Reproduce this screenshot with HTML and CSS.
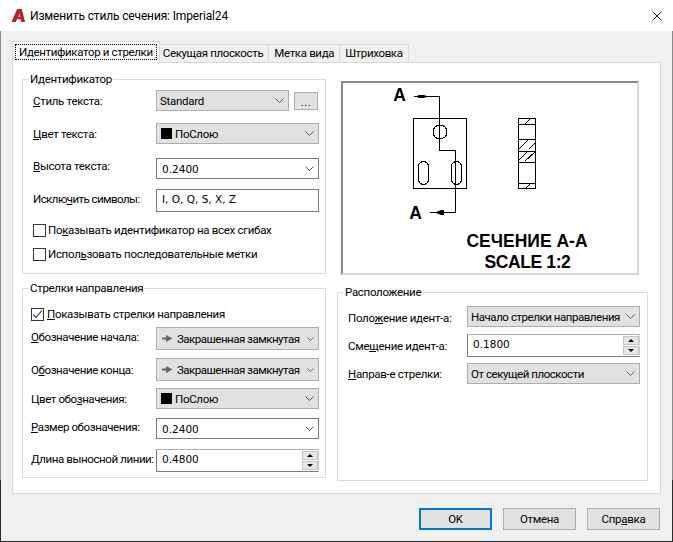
FILE: index.html
```html
<!DOCTYPE html>
<html lang="ru">
<head>
    <meta charset="UTF-8">
    <title>Изменить стиль сечения: Imperial24</title>
    <link rel="stylesheet" href="styles.css">
</head>
<body>
    <div class="window">
        <header class="titlebar">
            <svg class="app-icon" viewBox="0 0 16 16">
                <path d="M0.5 15 L6.5 1 H11.5 L15 15 H11 L10.3 12 H6.5 L5 15 Z" fill="#b5252d"/>
                <path d="M7.6 9.5 H9.8 L9 5.5 Z" fill="#f3c4c4"/>
            </svg>
            <span class="title">Изменить стиль сечения: Imperial24</span>
            <svg class="close" viewBox="0 0 11 11"><path d="M0.5 0.5 L10.5 10.5 M10.5 0.5 L0.5 10.5" stroke="#000" fill="none"/></svg>
        </header>

        <div class="tabs">
            <div class="tab active"><span>Идентификатор и стрелки</span></div>
            <div class="tab tab-next">Секущая плоскость</div>
            <div class="tab">Метка вида</div>
            <div class="tab">Штриховка</div>
        </div>

        <main class="panel">
            <div class="col col-left">
                <fieldset class="group group-id">
                    <legend>Идентификатор</legend>
                    <div class="row r-style">
                        <label><u>С</u>тиль текста:</label>
                        <div class="combo combo-short">Standard<svg class="chev" viewBox="0 0 9 5"><path d="M0.5 0.5 L4.5 4.5 L8.5 0.5" fill="none" stroke="#555"/></svg></div>
                        <div class="more">...</div>
                    </div>
                    <div class="row r-color">
                        <label><u>Ц</u>вет текста:</label>
                        <div class="combo"><i class="swatch"></i>ПоСлою<svg class="chev" viewBox="0 0 9 5"><path d="M0.5 0.5 L4.5 4.5 L8.5 0.5" fill="none" stroke="#555"/></svg></div>
                    </div>
                    <div class="row r-height">
                        <label class="label-high"><u>В</u>ысота текста:</label>
                        <div class="input">0.2400<svg class="chev" viewBox="0 0 9 5"><path d="M0.5 0.5 L4.5 4.5 L8.5 0.5" fill="none" stroke="#555"/></svg></div>
                    </div>
                    <div class="row r-exclude">
                        <label class="label-up label-tight">Исклю<u>ч</u>ить символы:</label>
                        <div class="input input-tall">I, O, Q, S, X, Z</div>
                    </div>
                    <div class="check check-first"><i class="box"></i><span>По<u>к</u>азывать идентификатор на всех сгибах</span></div>
                    <div class="check check-second"><i class="box"></i><span>Испол<u>ь</u>зовать последовательные метки</span></div>
                </fieldset>

                <fieldset class="group group-arrows">
                    <legend>Стрелки направления</legend>
                    <div class="check check-on">
                        <i class="box"><svg viewBox="0 0 11 11"><path d="M1 5.5 L4 8.5 L10 1.5" fill="none" stroke="#555" stroke-width="1.2"/></svg></i>
                        <span><u>П</u>оказывать стрелки направления</span>
                    </div>
                    <div class="row r-start">
                        <label class="label-up"><u>О</u>бозначение начала:</label>
                        <div class="combo combo-tall"><svg class="arrow" viewBox="0 0 11 9"><path d="M0 3.500 H4 L4 1 L10.500 4.500 L4 8 L4 5.500 H0 Z" fill="#666"/></svg>Закрашенная замкнутая<svg class="chev chev-sm" viewBox="0 0 7 4"><path d="M0.5 0.5 L3.5 3.5 L6.5 0.5" fill="none" stroke="#666"/></svg></div>
                    </div>
                    <div class="row r-end">
                        <label>О<u>б</u>означение конца:</label>
                        <div class="combo combo-tall"><svg class="arrow" viewBox="0 0 11 9"><path d="M0 3.500 H4 L4 1 L10.500 4.500 L4 8 L4 5.500 H0 Z" fill="#666"/></svg>Закрашенная замкнутая<svg class="chev chev-sm" viewBox="0 0 7 4"><path d="M0.5 0.5 L3.5 3.5 L6.5 0.5" fill="none" stroke="#666"/></svg></div>
                    </div>
                    <div class="row r-mcolor">
                        <label>Цвет обо<u>з</u>начения:</label>
                        <div class="combo"><i class="swatch"></i>ПоСлою<svg class="chev" viewBox="0 0 9 5"><path d="M0.5 0.5 L4.5 4.5 L8.5 0.5" fill="none" stroke="#555"/></svg></div>
                    </div>
                    <div class="row r-size">
                        <label class="label-up"><u>Р</u>азмер обозначения:</label>
                        <div class="input">0.2400<svg class="chev" viewBox="0 0 9 5"><path d="M0.5 0.5 L4.5 4.5 L8.5 0.5" fill="none" stroke="#555"/></svg></div>
                    </div>
                    <div class="row r-length">
                        <label class="label-up label-tight"><u>Д</u>лина выносной линии:</label>
                        <div class="input input-tall input-spin">0.4800
                            <div class="spin"><b class="up"></b><b class="down"></b></div>
                        </div>
                    </div>
                </fieldset>
            </div>

            <div class="col col-right">
                <div class="preview">
                    <svg class="drawing" viewBox="343 83 294 190">
                        <g fill="none" stroke="#000" shape-rendering="crispEdges">
                            <path d="M414 96.5 H439.5 V150.5 H455.5 V212.5 H430"/>
                            <rect x="413.5" y="118.5" width="53" height="70"/>
                            <rect x="518.5" y="118.5" width="17" height="70"/>
                            <path d="M518 124.500 H536 M518 139.500 H536 M518 151.500 H536 M518 162.500 H536 M518 183.500 H536"/>
                            <circle cx="440" cy="132" r="7"/>
                            <rect x="418.5" y="161.5" width="10" height="23" rx="5"/>
                            <rect x="451.5" y="161.5" width="10" height="23" rx="5"/>
                            <path d="M525 124 L531 118 M519 149 L529 139 M529 149 L535 143 M519 160 L528 151 M525 161 L535 152 M526 188 L531 183"/>
                        </g>
                        <path d="M418 95 H424 L428 96.500 L424 98 H418 Z M435 212.500 L441 210 H444 V215 H441 Z" fill="#000"/>
                        <g class="draw-text">
                            <text x="399.500" y="101">A</text>
                            <text x="415.500" y="219">A</text>
                            <text x="527" y="247">СЕЧЕНИЕ А-А</text>
                            <text class="scale" x="527.500" y="268">SCALE 1:2</text>
                        </g>
                    </svg>
                </div>

                <fieldset class="group group-place">
                    <legend>Расположение</legend>
                    <div class="row r-pos">
                        <label class="label-low">Поло<u>ж</u>ение идент-а:</label>
                        <div class="combo">Начало стрелки направления<svg class="chev" viewBox="0 0 9 5"><path d="M0.5 0.5 L4.5 4.5 L8.5 0.5" fill="none" stroke="#666"/></svg></div>
                    </div>
                    <div class="row r-offset">
                        <label>Сме<u>щ</u>ение идент-а:</label>
                        <div class="input input-tall input-spin">0.1800
                            <div class="spin"><b class="up"></b><b class="down"></b></div>
                        </div>
                    </div>
                    <div class="row r-dir">
                        <label><u>Н</u>аправ-е стрелки:</label>
                        <div class="combo">От секущей плоскости<svg class="chev" viewBox="0 0 9 5"><path d="M0.5 0.5 L4.5 4.5 L8.5 0.5" fill="none" stroke="#666"/></svg></div>
                    </div>
                </fieldset>
            </div>
        </main>

        <footer class="buttons">
            <div class="btn btn-default">OK</div>
            <div class="btn">Отмена</div>
            <div class="btn">Спр<u>а</u>вка</div>
        </footer>
    </div>
</body>
</html>
```

FILE: styles.css
```css
* {
    margin: 0;
    padding: 0;
    box-sizing: border-box;
}

html, body {
    width: 673px;
    height: 542px;
    overflow: hidden;
}

body {
    font-family: Roboto, 'Liberation Sans', sans-serif;
    font-size: 11.5px;
    letter-spacing: -0.3px;
    color: #000;
    background: linear-gradient(#fff 31px, #8a8a8a 31px, #8a8a8a 480px, #2a2a2a 480px);
}

.window {
    width: 671px;
    height: 541px;
    margin-left: 1px;
    background: #f0f0f0;
}

.titlebar {
    height: 31px;
    background: #fff;
    display: flex;
    align-items: center;
    padding: 0 10px 0 10px;
}

.app-icon {
    width: 15px;
    height: 15px;
    margin-right: 4px;
}

.title {
    flex: 1;
    font-size: 12px;
    letter-spacing: -0.15px;
}

.close {
    width: 10px;
    height: 10px;
}

.tabs {
    display: flex;
    align-items: flex-end;
    height: 31px;
    padding-left: 11px;
    position: relative;
    z-index: 1;
    letter-spacing: -0.35px;
}

.tab {
    height: 19px;
    padding: 0 5px;
    line-height: 17px;
    background: #f0f0f0;
    border: 1px solid #d9d9d9;
    border-left: 0;
    margin-bottom: -1px;
}

.tab-next {
    padding-left: 3px;
}

.tab.active {
    height: 22px;
    padding: 2px;
    line-height: 14px;
    background: #fff;
    border: 1px solid #d9d9d9;
    border-bottom: 0;
}

.tab.active span {
    display: block;
    height: 16px;
    padding: 0 3px;
    border: 1px dotted #000;
}

.panel {
    width: 649px;
    height: 432px;
    margin-left: 11px;
    background: #fff;
    border: 1px solid #d9d9d9;
    display: flex;
    padding-left: 9px;
}

.col-left {
    width: 304px;
    padding-top: 9px;
}

.col-right {
    width: 311px;
    margin-left: 11px;
    padding-top: 18px;
}

.group {
    border: 1px solid #dcdcdc;
    position: relative;
}

.group legend {
    padding: 0 1px;
    line-height: 14px;
}

.group-id {
    height: 202px;
    padding-left: 10px;
}

.group-id legend {
    margin-left: -4px;
}

.group-arrows {
    height: 197px;
    margin-top: 7px;
    padding-left: 8px;
}

.group-arrows legend {
    margin-left: -2px;
}

.group-arrows .row label {
    flex-basis: 125px;
    letter-spacing: -0.4px;
}

.group-place {
    height: 196px;
    margin-top: 10px;
    padding-left: 10px;
}

.group-place legend {
    margin-left: -4px;
}

.group-place .row label {
    flex-basis: 119px;
}

.row {
    display: flex;
    align-items: center;
}

.row label {
    flex: 0 0 123px;
    white-space: nowrap;
}

.row .label-high {
    margin-bottom: 6px;
}

.row .label-low {
    margin-top: 3px;
}

.row .label-up {
    margin-bottom: 3px;
}

.row .label-tight {
    letter-spacing: -0.55px;
}

.r-style { margin-top: 4px; }
.r-color { margin-top: 12px; }
.r-height { margin-top: 14px; }
.r-exclude { margin-top: 10px; }
.r-start { margin-top: 6px; }
.r-end { margin-top: 8px; }
.r-mcolor { margin-top: 7px; }
.r-size { margin-top: 9px; }
.r-length { margin-top: 10px; }
.r-pos { margin-top: 7px; }
.r-offset { margin-top: 7px; }
.r-dir { margin-top: 6px; }

.combo, .input {
    flex: 0 0 163px;
    height: 21px;
    display: flex;
    align-items: center;
    position: relative;
    white-space: nowrap;
}

.group-place .combo, .group-place .input {
    flex-basis: 173px;
}

.combo {
    background: #e1e1e1;
    border: 1px solid #adadad;
    padding-left: 3px;
}

.group-place .combo {
    letter-spacing: -0.45px;
}

.combo-tall {
    height: 23px;
    padding-left: 5px;
    letter-spacing: -0.5px;
}

.combo-short {
    flex-basis: 133px;
}

.input {
    background: #fff;
    border: 1px solid #7a7a7a;
    padding-left: 5px;
    font-family: 'DejaVu Sans', sans-serif;
    font-size: 10.5px;
    letter-spacing: 0;
}

.input-tall {
    height: 23px;
    padding-bottom: 3px;
}

.input-spin {
    border-top-color: #adadad;
    border-right-color: #d0d0d0;
}

.chev {
    position: absolute;
    right: 4px;
    top: 7px;
    width: 9px;
    height: 5px;
}

.chev-sm {
    width: 7px;
    height: 4px;
    top: 9px;
}

.arrow {
    width: 11px;
    height: 9px;
    margin-right: 4px;
    flex-shrink: 0;
}

.swatch {
    width: 11px;
    height: 11px;
    background: #000;
    margin: 0 3px 0 1px;
}

.more {
    width: 24px;
    height: 18px;
    margin-left: 5px;
    background: #e1e1e1;
    border: 1px solid #adadad;
    text-align: center;
    line-height: 18px;
    letter-spacing: 0.5px;
}

.spin {
    position: absolute;
    right: 0;
    top: 0;
    bottom: 0;
    width: 16px;
    display: flex;
    flex-direction: column;
    gap: 1px;
    padding: 1px 0;
}

.spin b {
    flex: 1;
    background: #e6e6e6;
    border: 1px solid #c4c4c4;
    position: relative;
}

.spin b::after {
    content: '';
    position: absolute;
    left: 4px;
    top: 2px;
    border-left: 3px solid transparent;
    border-right: 3px solid transparent;
}

.spin .up::after { border-bottom: 3px solid #000; }
.spin .down::after { border-top: 3px solid #000; }

.check {
    display: flex;
    align-items: center;
    white-space: nowrap;
    gap: 2px;
    line-height: 14px;
}

.box {
    width: 13px;
    height: 13px;
    border: 1px solid #333;
    background: #fff;
    display: block;
}

.box svg {
    display: block;
}

.check-first { margin-top: 11px; }
.check-second { margin-top: 10px; }
.check-on { margin-top: 12px; gap: 3px; }

.preview {
    width: 298px;
    height: 194px;
    margin-left: 4px;
    background: #fff;
    border: 2px solid #d8d8d8;
    border-top-color: #8a8a8a;
    border-left-color: #8a8a8a;
}

.drawing {
    display: block;
    width: 100%;
    height: 100%;
}

.draw-text text {
    font-family: 'Liberation Sans', sans-serif;
    font-size: 17.5px;
    font-weight: 700;
    letter-spacing: 0;
    text-anchor: middle;
}

.draw-text .scale {
    letter-spacing: -0.4px;
}

.buttons {
    display: flex;
    justify-content: flex-end;
    gap: 11px;
    padding: 14px 12px 0 0;
}

.btn {
    width: 73px;
    height: 22px;
    background: #e1e1e1;
    border: 1px solid #adadad;
    text-align: center;
    line-height: 20px;
}

.btn-default {
    border: 2px solid #0078d7;
    line-height: 18px;
}
```
